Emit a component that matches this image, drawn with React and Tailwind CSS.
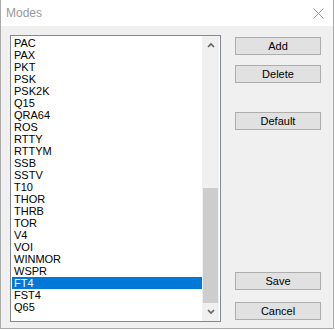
import React from "react";

const modes = [
  "PAC", "PAX", "PKT", "PSK", "PSK2K", "Q15", "QRA64", "ROS", "RTTY", "RTTYM",
  "SSB", "SSTV", "T10", "THOR", "THRB", "TOR", "V4", "VOI", "WINMOR", "WSPR",
  "FT4", "FST4", "Q65",
];

function Btn({ label, className = "" }) {
  return (
    <button
      className={
        "w-[86px] h-[18px] bg-[#e1e1e1] border border-[#adadad] text-[11px] leading-[16px] text-black text-center " +
        className
      }
    >
      {label}
    </button>
  );
}

function Chevron({ up }) {
  return (
    <svg width="8" height="6" viewBox="0 0 8 6" className="text-[#606060]">
      <path
        d={up ? "M1 5 L4 2 L7 5" : "M1 1 L4 4 L7 1"}
        fill="none"
        stroke="currentColor"
        strokeWidth="1.6"
      />
    </svg>
  );
}

export default function App() {
  const selected = "FT4";
  return (
    <div
      className="w-[334px] h-[329px] flex flex-col border-x border-b border-[#aaaaaa] bg-[#f0f0f0]"
      style={{ fontFamily: '"Liberation Sans", Arial, sans-serif' }}
    >
      <div className="h-[26px] bg-white flex items-center justify-between pl-[5px] pr-[9px]">
        <span className="text-[12px] text-[#999999]">Modes</span>
        <svg width="11" height="11" viewBox="0 0 11 11">
          <path d="M0.5 0.5 L10.5 10.5 M10.5 0.5 L0.5 10.5" stroke="#999999" strokeWidth="1" />
        </svg>
      </div>
      <div className="flex pl-[9px] pt-[9px]">
        <div className="w-[211px] h-[287px] border border-[#828790] bg-white flex">
          <div className="flex-1 pt-px pl-px">
            {modes.map((m) => (
              <div
                key={m}
                className={
                  "h-[12px] leading-[12px] text-[11px] pl-[2px] " +
                  (m === selected ? "bg-[#0078d7] text-white" : "text-black")
                }
              >
                {m}
              </div>
            ))}
          </div>
          <div className="w-[17px] bg-[#f0f0f0] flex flex-col mr-px">
            <div className="h-[17px] flex items-center justify-center">
              <Chevron up />
            </div>
            <div className="h-[135px]" />
            <div className="h-[115px] mx-px bg-[#cdcdcd]" />
            <div className="flex-1 flex items-center justify-center">
              <Chevron />
            </div>
          </div>
        </div>
        <div className="ml-[14px] h-[287px] flex flex-col pb-[2px]">
          <Btn label="Add" className="mt-[2px]" />
          <Btn label="Delete" className="mt-[10px]" />
          <Btn label="Default" className="mt-[29px]" />
          <Btn label="Save" className="mt-auto" />
          <Btn label="Cancel" className="mt-[12px]" />
        </div>
      </div>
    </div>
  );
}
